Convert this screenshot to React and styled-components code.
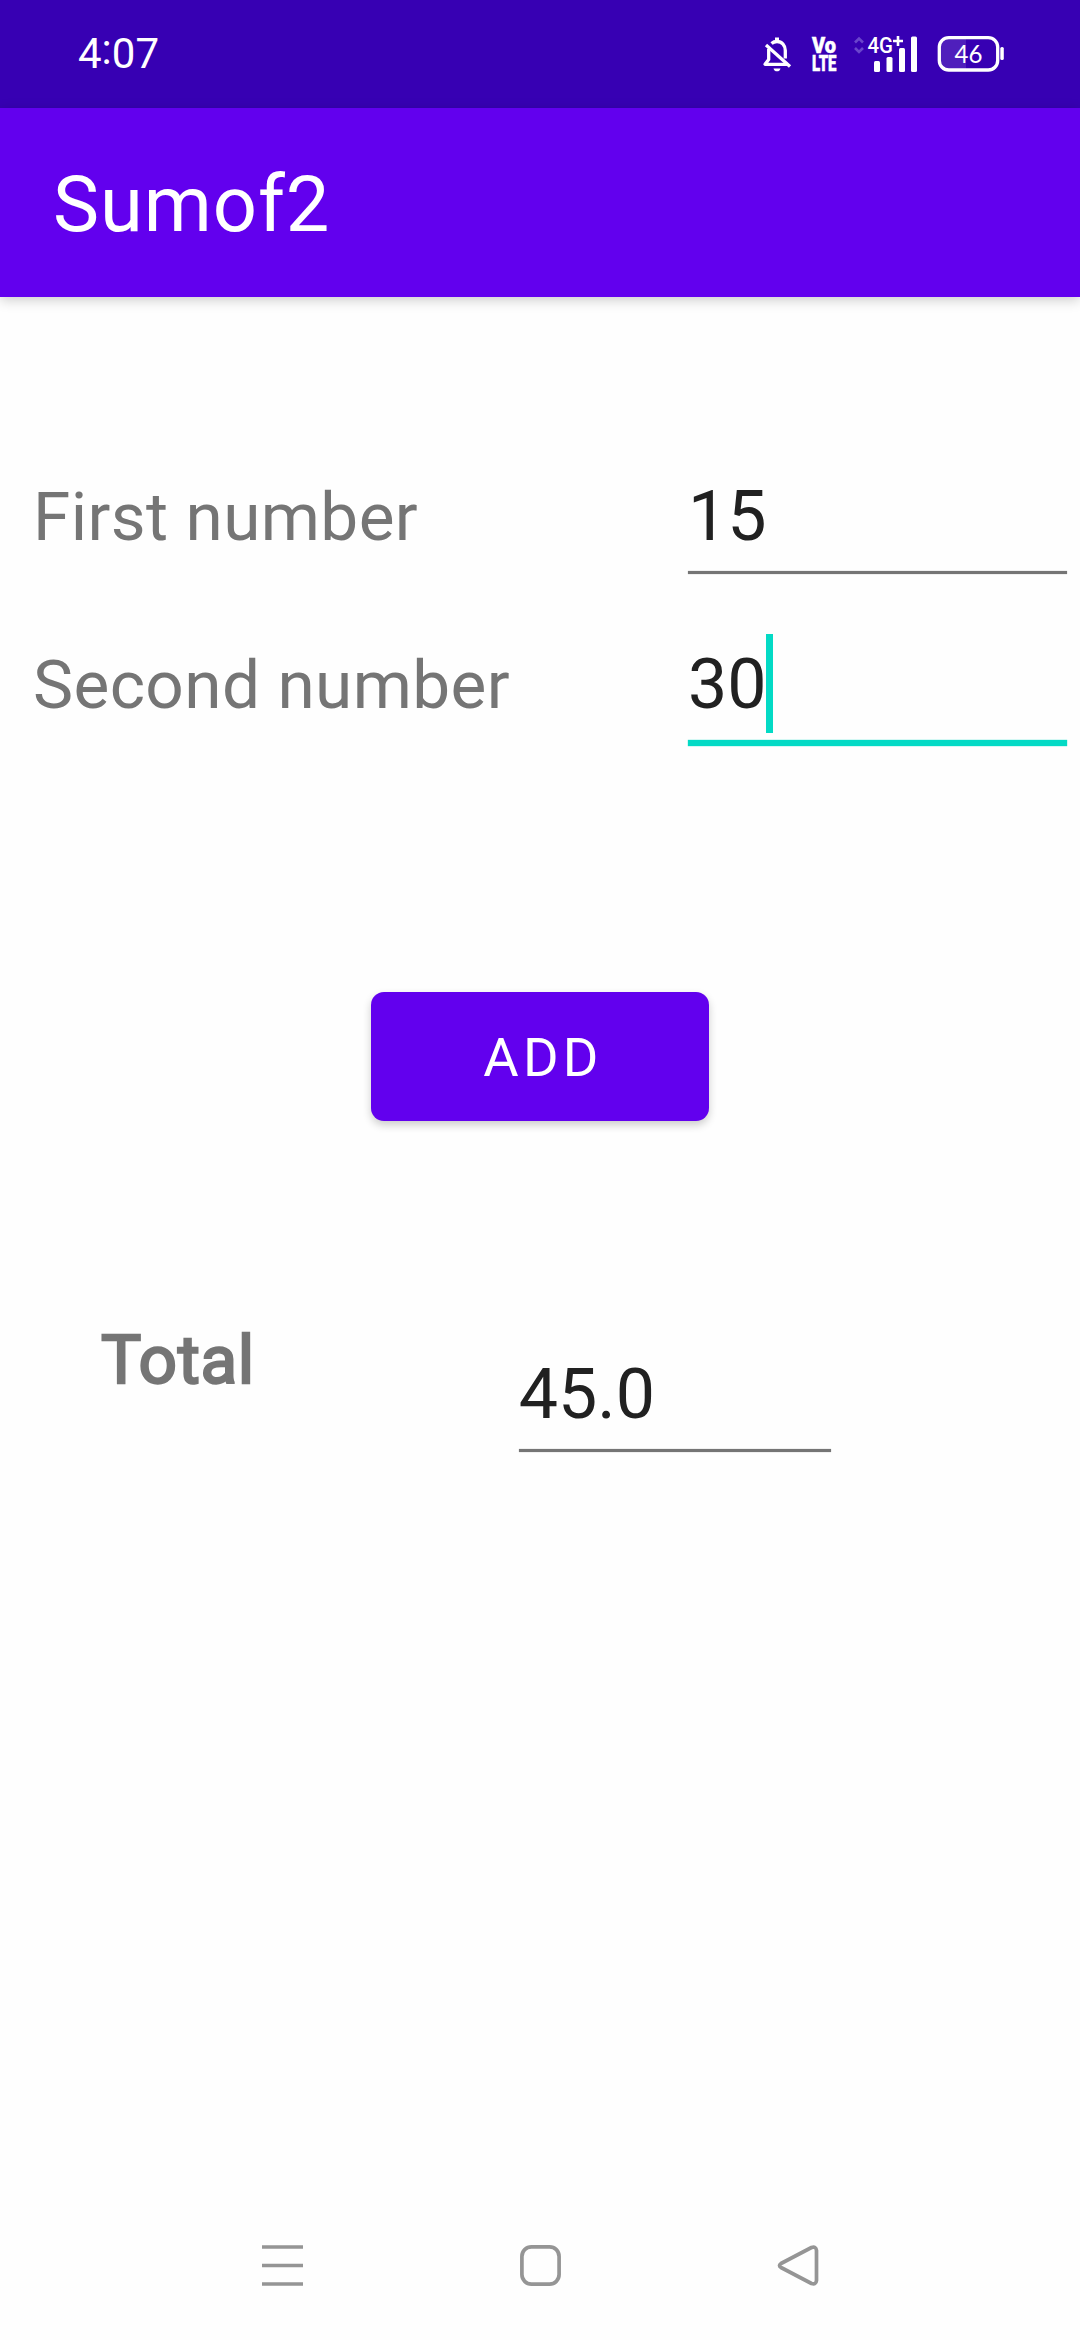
import React from "react";
import styled, { createGlobalStyle } from "styled-components";

const GlobalStyle = createGlobalStyle`
  * { box-sizing: border-box; }
  html, body { margin: 0; padding: 0; background: #fefefe; }
  body { font-family: Roboto, "Noto Sans", sans-serif; }
`;

const Screen = styled.div`
  display: flex;
  flex-direction: column;
  width: 1080px;
  height: 2340px;
  background: #fefefe;
  overflow: hidden;
`;

const StatusBar = styled.header`
  display: flex;
  justify-content: space-between;
  align-items: center;
  height: 108px;
  padding: 0 76px 0 78px;
  background: #3700b3;
  color: #fff;
  flex: none;
`;

const Clock = styled.div`
  font-size: 42px;
  line-height: 50px;
`;

const Colon = styled.span`
  vertical-align: 4px;
  line-height: 0;
`;

const StatusIcons = styled.div`
  display: flex;
  align-items: center;
`;

const Glyph = styled.svg`
  display: block;
  flex: none;
  overflow: visible;
  margin-left: ${(p) => p.$gap || 0}px;
`;

const AppBar = styled.div`
  display: flex;
  align-items: center;
  height: 189px;
  padding: 0 53px;
  background: #6200ee;
  box-shadow: 0 3px 12px rgba(0, 0, 0, 0.2);
  flex: none;
`;

const Title = styled.h1`
  margin: 0;
  padding-top: 4px;
  font-size: 77.6px;
  font-weight: 400;
  letter-spacing: 0.95px;
  line-height: 90px;
  color: #fff;
`;

const Content = styled.main`
  display: flex;
  flex-direction: column;
  flex: 1;
  padding-top: 169px;
`;

const Row = styled.div`
  display: flex;
  justify-content: space-between;
  align-items: flex-start;
  height: ${(p) => p.$height}px;
  padding: 0 13px 0 33px;
`;

const Label = styled.label`
  padding-top: ${(p) => (p.$strong ? 0 : 1)}px;
  font-size: 67.5px;
  line-height: 99px;
  letter-spacing: ${(p) => (p.$strong ? 0.6 : 0.38)}px;
  color: #757575;
  white-space: nowrap;
  -webkit-text-stroke: ${(p) => (p.$strong ? "2.3px #757575" : "0")};
`;

const Field = styled.div`
  display: flex;
  flex-direction: column;
  gap: ${(p) => (p.$active ? 7 : 6)}px;
  width: ${(p) => p.$width}px;
`;

const Value = styled.div`
  display: flex;
  height: 99px;
  font-size: 69.9px;
  line-height: 101px;
  color: #212121;
`;

const Caret = styled.span`
  width: 7px;
  height: 99px;
  margin-left: -1px;
  background: #03dac5;
`;

const Underline = styled.div`
  height: ${(p) => (p.$active ? 6 : 3)}px;
  background: ${(p) => (p.$active ? "#03dac5" : "#757575")};
  box-shadow: 0 0 1px ${(p) => (p.$active ? "#03dac5" : "#757575")};
`;

const AddButton = styled.button`
  align-self: center;
  width: 338px;
  height: 129px;
  margin-top: 188px;
  padding: 2px 0 0 6px;
  border: 0;
  border-radius: 13px;
  background: #6200ee;
  box-shadow: 0 4px 8px rgba(0, 0, 0, 0.2);
  color: #fff;
  font-family: inherit;
  font-size: 54.3px;
  font-weight: 400;
  letter-spacing: 4.3px;
`;

const TotalRow = styled.div`
  display: flex;
  align-items: flex-start;
  margin-top: 189px;
  padding-left: 101px;
`;

const TotalField = styled.div`
  margin: 34px 0 0 264px;
`;

const NavBar = styled.nav`
  display: flex;
  justify-content: space-between;
  align-items: center;
  height: 150px;
  padding: 0 259px 0 260px;
  flex: none;
`;

function BellOff() {
  return (
    <Glyph width="30" height="36" viewBox="0 0 30 36" fill="none" stroke="#fff" strokeWidth="3.300" strokeLinejoin="round">
      <path d="M15 1.500v4" strokeWidth="4" />
      <path d="M9.500 7.500C11 6.200 13 5.500 15 5.500c5 0 8.300 3.800 8.300 9v8" />
      <path d="M6.700 13v10.500L3 28.300h23" />
      <path d="M4 9L28 30.500" strokeWidth="3.300" />
      <path d="M11.500 32.500h7c-.5 2-1.800 2.800-3.500 2.800s-3-.8-3.500-2.800z" fill="#fff" stroke="none" />
    </Glyph>
  );
}

function VoLte() {
  return (
    <Glyph $gap={20} width="26" height="36" viewBox="0 0 26 36" fill="#fff" stroke="#fff" strokeWidth="0.500" fontFamily="Roboto, sans-serif" fontWeight="900">
      <text fontSize="22">
        <tspan x="0" y="17" textLength="24" lengthAdjust="spacingAndGlyphs">Vo</tspan>
        <tspan x="0" y="35" textLength="24.500" lengthAdjust="spacingAndGlyphs">LTE</tspan>
      </text>
    </Glyph>
  );
}

function Signal() {
  return (
    <Glyph $gap={15} width="66" height="38" viewBox="0 0 66 38" fill="#fff">
      <path d="M2 7.500L6 3.500l4 4M2 13l4 4 4-4" fill="none" stroke="#6a45cc" strokeWidth="2.600" />
      <text x="14.500" y="18" fontFamily="Roboto, sans-serif" fontSize="22.500" fontWeight="500" textLength="25.500" lengthAdjust="spacingAndGlyphs">4G</text>
      <path d="M45 1v10M40 6h10" stroke="#fff" strokeWidth="2.600" />
      <rect x="21" y="26" width="6" height="11" rx="1.500" />
      <rect x="33.500" y="22" width="6" height="15" rx="1.500" />
      <rect x="46" y="13" width="6" height="24" rx="1.500" />
      <rect x="58" y="1.500" width="6" height="35.500" rx="1.500" />
    </Glyph>
  );
}

function Battery() {
  return (
    <Glyph $gap={17} width="68" height="38" viewBox="0 0 68 38">
      <path d="M30 3H12a9 9 0 0 0-9 9v13a9 9 0 0 0 9 9h18z" fill="#fff" fillOpacity="0.120" />
      <rect x="3.300" y="2.600" width="58.400" height="32.400" rx="9.500" fill="none" stroke="#fff" strokeWidth="3.300" />
      <rect x="64.300" y="12" width="3.500" height="13" rx="1.500" fill="#fff" />
      <text x="18.500" y="27.500" fill="#fff" fontFamily="Lato, Roboto, sans-serif" fontWeight="400" fontSize="25" textLength="28" lengthAdjust="spacingAndGlyphs">46</text>
    </Glyph>
  );
}

function NavIcon({ children }) {
  return (
    <Glyph width="45" height="45" viewBox="0 0 45 45" fill="none" stroke="#959595" strokeWidth="3.700" strokeLinejoin="round">
      {children}
    </Glyph>
  );
}

export default function App() {
  return (
    <Screen>
      <GlobalStyle />
      <StatusBar>
        <Clock>4<Colon>:</Colon>07</Clock>
        <StatusIcons>
          <BellOff />
          <VoLte />
          <Signal />
          <Battery />
        </StatusIcons>
      </StatusBar>
      <AppBar>
        <Title>Sumof2</Title>
      </AppBar>
      <Content>
        <Row $height={168}>
          <Label>First number</Label>
          <Field $width={379}>
            <Value>15</Value>
            <Underline />
          </Field>
        </Row>
        <Row $height={170}>
          <Label>Second number</Label>
          <Field $width={379} $active>
            <Value>30<Caret /></Value>
            <Underline $active />
          </Field>
        </Row>
        <AddButton>ADD</AddButton>
        <TotalRow>
          <Label $strong>Total</Label>
          <TotalField>
            <Field $width={312}>
              <Value>45.0</Value>
              <Underline />
            </Field>
          </TotalField>
        </TotalRow>
      </Content>
      <NavBar>
        <NavIcon>
          <path d="M2 4h41M2 22.500h41M2 41h41" />
        </NavIcon>
        <NavIcon>
          <rect x="3.900" y="3.900" width="37.200" height="37.200" rx="9.500" />
        </NavIcon>
        <NavIcon>
          <path d="M35.500 4.500L5 20.500q-3 2 0 4L35.500 40.500q4.500 1.500 5-3v-30q-.5-4.500-5-3z" />
        </NavIcon>
      </NavBar>
    </Screen>
  );
}
